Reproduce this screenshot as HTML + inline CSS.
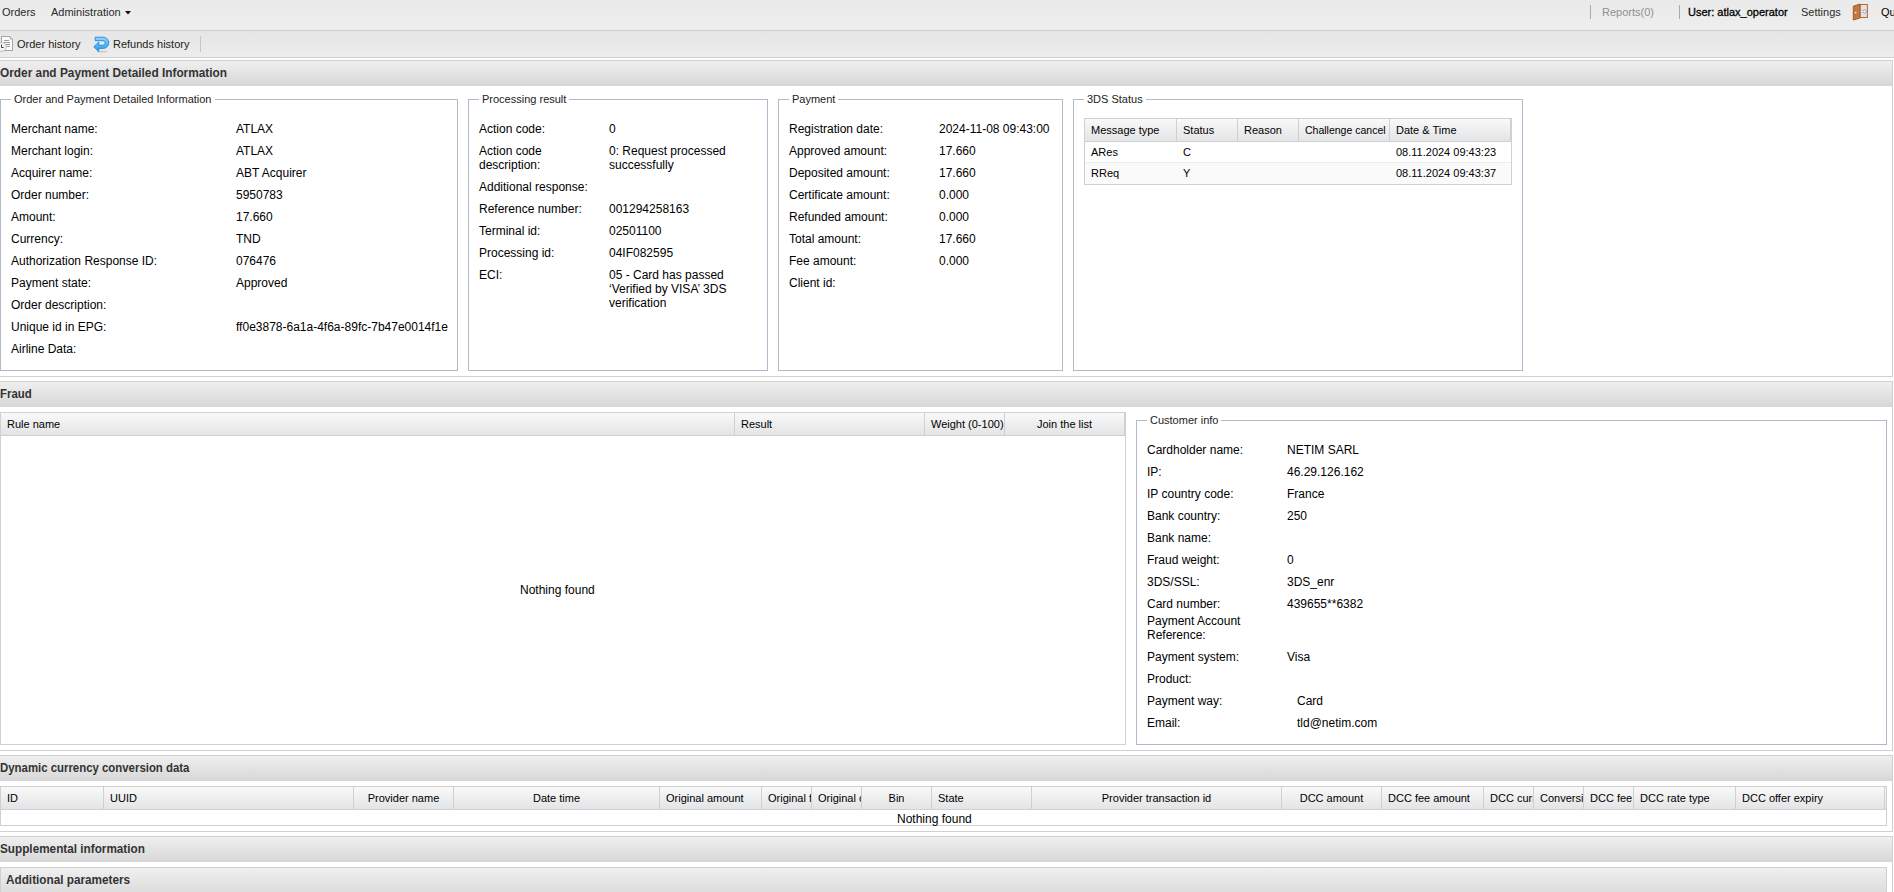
<!DOCTYPE html><html><head><meta charset="utf-8"><style>
html,body{margin:0;padding:0;background:#fff;width:1894px;height:892px;overflow:hidden;position:relative}
.t{position:absolute;white-space:nowrap;font-family:"Liberation Sans",sans-serif;line-height:14px}
.r{position:absolute}
</style></head><body>
<div class="r" style="left:0px;top:0px;width:1894px;height:30px;background:linear-gradient(#eaeaea,#eeeeee)"></div>
<div class="r" style="left:0px;top:30px;width:1894px;height:1px;background:#d0d0d0"></div>
<div class="t" style="left:2px;top:5px;font-size:11px;color:#2a2a2a;">Orders</div>
<div class="t" style="left:51px;top:5px;font-size:11px;color:#2a2a2a;">Administration</div>
<svg class="r" style="left:125px;top:11px" width="6" height="4"><path d="M0 0H6L3 3.5Z" fill="#111"/></svg>
<div class="r" style="left:1590px;top:5px;width:1px;height:14px;background:#b4aa9c"></div>
<div class="t" style="left:1602px;top:5px;font-size:11px;color:#8f8f8f;">Reports(0)</div>
<div class="r" style="left:1679px;top:5px;width:1px;height:14px;background:#b4aa9c"></div>
<div class="t" style="left:1688px;top:5px;font-size:11px;color:#000;-webkit-text-stroke:0.3px #000;">User: atlax_operator</div>
<div class="t" style="left:1801px;top:5px;font-size:11px;color:#2a2a2a;">Settings</div>
<svg class="r" style="left:1852px;top:3px" width="17" height="18" viewBox="0 0 17 18">
<rect x="8.1" y="1.5" width="7.3" height="13" fill="#dfe3e7" stroke="#b8672e" stroke-width="1"/>
<path d="M10 8.5 H13.5 M12 6.8 L14.2 8.5 L12 10.2" fill="none" stroke="#8a8a8a" stroke-width="1.8"/>
<path d="M10 8.5 H13.5 M12 6.8 L14.2 8.5 L12 10.2" fill="none" stroke="#fff" stroke-width="0.9"/>
<path d="M1.3 3.2 L7.9 1.1 V15 L1.3 17 Z" fill="#cd7e44" stroke="#98501f" stroke-width="0.9"/>
<path d="M3.2 3.8 V15.5 M5.5 3 V14.6" stroke="#b7692f" stroke-width="0.7"/>
<circle cx="3.6" cy="9.6" r="0.9" fill="#f2f2f2"/>
</svg>
<div class="t" style="left:1881px;top:5px;font-size:11px;color:#000;">Quit</div>
<div class="r" style="left:0px;top:31px;width:1894px;height:26px;background:linear-gradient(#e6e6e6,#ececec)"></div>
<div class="r" style="left:0px;top:57px;width:1894px;height:1px;background:#d0d0d0"></div>
<svg class="r" style="left:0px;top:35px" width="15" height="17" viewBox="0 0 15 17">
<path d="M1.5 1.5 H10 L12.5 4 V15.5 H1.5 Z" fill="#fbfbfb" stroke="#a4a4a4"/>
<path d="M10 1.5 V4 H12.5" fill="#e8e8e8" stroke="#b0b0b0"/>
<path d="M4 5.5H9 M4 7.5H10 M5.5 9.5H10 M6.5 11.5H10" stroke="#9c9c9c" stroke-width="1"/>
<circle cx="1.7" cy="12" r="4.4" fill="#f4f4f2" stroke="#bdbdbd" stroke-width="1"/>
<path d="M1.5 9.6 V12.5 H3.6" fill="none" stroke="#3a3a3a" stroke-width="1"/>
</svg>
<div class="t" style="left:17px;top:37px;font-size:11px;color:#222;">Order history</div>
<svg class="r" style="left:93px;top:36px" width="17" height="17" viewBox="0 0 17 17">
<defs><linearGradient id="rg" x1="0" y1="0" x2="0" y2="1"><stop offset="0" stop-color="#8fd6ff"/><stop offset="1" stop-color="#1aa0f0"/></linearGradient></defs>
<ellipse cx="9" cy="15.6" rx="5.5" ry="0.9" fill="#c9c9c9"/>
<path d="M2.2 1.2 H10.2 A5.6 5.6 0 0 1 10.2 12.4 H5.8 V15.6 L0.7 10.8 L5.8 6.1 V9.2 H10 A2.2 2.2 0 0 0 10 4.7 H2.2 Z" fill="url(#rg)" stroke="#2a86d6" stroke-width="0.9" stroke-linejoin="round"/>
</svg>
<div class="t" style="left:113px;top:37px;font-size:11px;color:#222;">Refunds history</div>
<div class="r" style="left:200px;top:36px;width:1px;height:16px;background:#c6c6c6"></div>
<div class="r" style="left:0px;top:60px;width:1893px;height:1px;background:#d0d0d0"></div>
<div class="r" style="left:0px;top:61px;width:1893px;height:25px;background:linear-gradient(#efefef,#d7d7d7);"></div>
<div class="r" style="left:1892px;top:60px;width:1px;height:26px;background:#d0d0d0"></div>
<div class="t" style="left:0px;top:66px;font-size:12px;font-weight:bold;color:#333;transform:scaleX(0.987);transform-origin:0 0;">Order and Payment Detailed Information</div>
<div class="r" style="left:1892px;top:86px;width:1px;height:291px;background:#d0d0d0"></div>
<div class="r" style="left:0px;top:376px;width:1893px;height:1px;background:#d0d0d0"></div>
<div class="r" style="left:0px;top:99px;width:458px;height:272px;border:1px solid #b5b8c8;box-sizing:border-box;"></div>
<div class="t" style="left:11px;top:92px;font-size:11px;color:#222;background:#fff;padding:0 3px">Order and Payment Detailed Information</div>
<div class="t" style="left:11px;top:122px;font-size:12px;color:#000;">Merchant name:</div>
<div class="t" style="left:236px;top:122px;font-size:12px;color:#000;">ATLAX</div>
<div class="t" style="left:11px;top:144px;font-size:12px;color:#000;">Merchant login:</div>
<div class="t" style="left:236px;top:144px;font-size:12px;color:#000;">ATLAX</div>
<div class="t" style="left:11px;top:166px;font-size:12px;color:#000;">Acquirer name:</div>
<div class="t" style="left:236px;top:166px;font-size:12px;color:#000;">ABT Acquirer</div>
<div class="t" style="left:11px;top:188px;font-size:12px;color:#000;">Order number:</div>
<div class="t" style="left:236px;top:188px;font-size:12px;color:#000;">5950783</div>
<div class="t" style="left:11px;top:210px;font-size:12px;color:#000;">Amount:</div>
<div class="t" style="left:236px;top:210px;font-size:12px;color:#000;">17.660</div>
<div class="t" style="left:11px;top:232px;font-size:12px;color:#000;">Currency:</div>
<div class="t" style="left:236px;top:232px;font-size:12px;color:#000;">TND</div>
<div class="t" style="left:11px;top:254px;font-size:12px;color:#000;">Authorization Response ID:</div>
<div class="t" style="left:236px;top:254px;font-size:12px;color:#000;">076476</div>
<div class="t" style="left:11px;top:276px;font-size:12px;color:#000;">Payment state:</div>
<div class="t" style="left:236px;top:276px;font-size:12px;color:#000;">Approved</div>
<div class="t" style="left:11px;top:298px;font-size:12px;color:#000;">Order description:</div>
<div class="t" style="left:11px;top:320px;font-size:12px;color:#000;">Unique id in EPG:</div>
<div class="t" style="left:236px;top:320px;font-size:12px;color:#000;">ff0e3878-6a1a-4f6a-89fc-7b47e0014f1e</div>
<div class="t" style="left:11px;top:342px;font-size:12px;color:#000;">Airline Data:</div>
<div class="r" style="left:468px;top:99px;width:300px;height:272px;border:1px solid #b5b8c8;box-sizing:border-box;"></div>
<div class="t" style="left:479px;top:92px;font-size:11px;color:#222;background:#fff;padding:0 3px">Processing result</div>
<div class="t" style="left:479px;top:122px;font-size:12px;color:#000;">Action code:</div>
<div class="t" style="left:609px;top:122px;font-size:12px;color:#000;">0</div>
<div class="t" style="left:479px;top:144px;font-size:12px;color:#000;">Action code</div>
<div class="t" style="left:479px;top:158px;font-size:12px;color:#000;">description:</div>
<div class="t" style="left:609px;top:144px;font-size:12px;color:#000;">0: Request processed</div>
<div class="t" style="left:609px;top:158px;font-size:12px;color:#000;">successfully</div>
<div class="t" style="left:479px;top:180px;font-size:12px;color:#000;">Additional response:</div>
<div class="t" style="left:479px;top:202px;font-size:12px;color:#000;">Reference number:</div>
<div class="t" style="left:609px;top:202px;font-size:12px;color:#000;">001294258163</div>
<div class="t" style="left:479px;top:224px;font-size:12px;color:#000;">Terminal id:</div>
<div class="t" style="left:609px;top:224px;font-size:12px;color:#000;">02501100</div>
<div class="t" style="left:479px;top:246px;font-size:12px;color:#000;">Processing id:</div>
<div class="t" style="left:609px;top:246px;font-size:12px;color:#000;">04IF082595</div>
<div class="t" style="left:479px;top:268px;font-size:12px;color:#000;">ECI:</div>
<div class="t" style="left:609px;top:268px;font-size:12px;color:#000;">05 - Card has passed</div>
<div class="t" style="left:609px;top:282px;font-size:12px;color:#000;">‘Verified by VISA’ 3DS</div>
<div class="t" style="left:609px;top:296px;font-size:12px;color:#000;">verification</div>
<div class="r" style="left:778px;top:99px;width:285px;height:272px;border:1px solid #b5b8c8;box-sizing:border-box;"></div>
<div class="t" style="left:789px;top:92px;font-size:11px;color:#222;background:#fff;padding:0 3px">Payment</div>
<div class="t" style="left:789px;top:122px;font-size:12px;color:#000;">Registration date:</div>
<div class="t" style="left:939px;top:122px;font-size:12px;color:#000;">2024-11-08 09:43:00</div>
<div class="t" style="left:789px;top:144px;font-size:12px;color:#000;">Approved amount:</div>
<div class="t" style="left:939px;top:144px;font-size:12px;color:#000;">17.660</div>
<div class="t" style="left:789px;top:166px;font-size:12px;color:#000;">Deposited amount:</div>
<div class="t" style="left:939px;top:166px;font-size:12px;color:#000;">17.660</div>
<div class="t" style="left:789px;top:188px;font-size:12px;color:#000;">Certificate amount:</div>
<div class="t" style="left:939px;top:188px;font-size:12px;color:#000;">0.000</div>
<div class="t" style="left:789px;top:210px;font-size:12px;color:#000;">Refunded amount:</div>
<div class="t" style="left:939px;top:210px;font-size:12px;color:#000;">0.000</div>
<div class="t" style="left:789px;top:232px;font-size:12px;color:#000;">Total amount:</div>
<div class="t" style="left:939px;top:232px;font-size:12px;color:#000;">17.660</div>
<div class="t" style="left:789px;top:254px;font-size:12px;color:#000;">Fee amount:</div>
<div class="t" style="left:939px;top:254px;font-size:12px;color:#000;">0.000</div>
<div class="t" style="left:789px;top:276px;font-size:12px;color:#000;">Client id:</div>
<div class="r" style="left:1073px;top:99px;width:450px;height:272px;border:1px solid #b5b8c8;box-sizing:border-box;"></div>
<div class="t" style="left:1084px;top:92px;font-size:11px;color:#222;background:#fff;padding:0 3px">3DS Status</div>
<div class="r" style="left:1084px;top:118px;width:428px;height:67px;border:1px solid #d0d0d0;box-sizing:border-box;"></div>
<div class="r" style="left:1085px;top:119px;width:426px;height:22px;background:linear-gradient(#f9f9f9,#e3e4e6);"></div>
<div class="r" style="left:1085px;top:141px;width:426px;height:1px;background:#d0d0d0"></div>
<div class="r" style="left:1176px;top:119px;width:1px;height:22px;background:#d0d0d0"></div>
<div class="r" style="left:1237px;top:119px;width:1px;height:22px;background:#d0d0d0"></div>
<div class="r" style="left:1298px;top:119px;width:1px;height:22px;background:#d0d0d0"></div>
<div class="r" style="left:1389px;top:119px;width:1px;height:22px;background:#d0d0d0"></div>
<div class="r" style="left:1510px;top:119px;width:1px;height:22px;background:#d0d0d0"></div>
<div class="t" style="left:1091px;top:123px;font-size:11px;color:#000;">Message type</div>
<div class="t" style="left:1183px;top:123px;font-size:11px;color:#000;">Status</div>
<div class="t" style="left:1244px;top:123px;font-size:11px;color:#000;">Reason</div>
<div class="t" style="left:1305px;top:123px;font-size:11px;color:#000;transform:scaleX(0.955);transform-origin:0 0;">Challenge cancel</div>
<div class="t" style="left:1396px;top:123px;font-size:11px;color:#000;">Date &amp; Time</div>
<div class="r" style="left:1085px;top:162px;width:426px;height:1px;background:#ededed"></div>
<div class="r" style="left:1085px;top:163px;width:426px;height:21px;background:#fafafa"></div>
<div class="t" style="left:1091px;top:145px;font-size:11px;color:#000;">ARes</div>
<div class="t" style="left:1183px;top:145px;font-size:11px;color:#000;">C</div>
<div class="t" style="left:1396px;top:145px;font-size:11px;color:#000;">08.11.2024 09:43:23</div>
<div class="t" style="left:1091px;top:166px;font-size:11px;color:#000;">RReq</div>
<div class="t" style="left:1183px;top:166px;font-size:11px;color:#000;">Y</div>
<div class="t" style="left:1396px;top:166px;font-size:11px;color:#000;">08.11.2024 09:43:37</div>
<div class="r" style="left:0px;top:381px;width:1893px;height:1px;background:#d0d0d0"></div>
<div class="r" style="left:0px;top:382px;width:1893px;height:25px;background:linear-gradient(#efefef,#d7d7d7);"></div>
<div class="r" style="left:1892px;top:381px;width:1px;height:26px;background:#d0d0d0"></div>
<div class="t" style="left:0px;top:387px;font-size:12px;font-weight:bold;color:#333;transform:scaleX(0.95);transform-origin:0 0;">Fraud</div>
<div class="r" style="left:1892px;top:407px;width:1px;height:344px;background:#d0d0d0"></div>
<div class="r" style="left:0px;top:750px;width:1893px;height:1px;background:#d0d0d0"></div>
<div class="r" style="left:0px;top:412px;width:1126px;height:333px;border:1px solid #d0d0d0;box-sizing:border-box;"></div>
<div class="r" style="left:1px;top:413px;width:1124px;height:22px;background:linear-gradient(#f9f9f9,#e3e4e6);"></div>
<div class="r" style="left:1px;top:435px;width:1124px;height:1px;background:#d0d0d0"></div>
<div class="r" style="left:734px;top:413px;width:1px;height:22px;background:#d0d0d0"></div>
<div class="r" style="left:924px;top:413px;width:1px;height:22px;background:#d0d0d0"></div>
<div class="r" style="left:1004px;top:413px;width:1px;height:22px;background:#d0d0d0"></div>
<div class="r" style="left:1124px;top:413px;width:1px;height:22px;background:#d0d0d0"></div>
<div class="t" style="left:7px;top:417px;font-size:11px;color:#000;">Rule name</div>
<div class="t" style="left:741px;top:417px;font-size:11px;color:#000;">Result</div>
<div class="t" style="left:931px;top:417px;font-size:11px;color:#000;">Weight (0-100)</div>
<div class="t" style="left:1005px;width:119px;text-align:center;top:417px;font-size:11px;color:#000">Join the list</div>
<div class="t" style="left:520px;top:583px;font-size:12px;color:#000;">Nothing found</div>
<div class="r" style="left:1136px;top:420px;width:751px;height:325px;border:1px solid #b5b8c8;box-sizing:border-box;"></div>
<div class="t" style="left:1147px;top:413px;font-size:11px;color:#222;background:#fff;padding:0 3px">Customer info</div>
<div class="t" style="left:1147px;top:443px;font-size:12px;color:#000;">Cardholder name:</div>
<div class="t" style="left:1287px;top:443px;font-size:12px;color:#000;">NETIM SARL</div>
<div class="t" style="left:1147px;top:465px;font-size:12px;color:#000;">IP:</div>
<div class="t" style="left:1287px;top:465px;font-size:12px;color:#000;">46.29.126.162</div>
<div class="t" style="left:1147px;top:487px;font-size:12px;color:#000;">IP country code:</div>
<div class="t" style="left:1287px;top:487px;font-size:12px;color:#000;">France</div>
<div class="t" style="left:1147px;top:509px;font-size:12px;color:#000;">Bank country:</div>
<div class="t" style="left:1287px;top:509px;font-size:12px;color:#000;">250</div>
<div class="t" style="left:1147px;top:531px;font-size:12px;color:#000;">Bank name:</div>
<div class="t" style="left:1147px;top:553px;font-size:12px;color:#000;">Fraud weight:</div>
<div class="t" style="left:1287px;top:553px;font-size:12px;color:#000;">0</div>
<div class="t" style="left:1147px;top:575px;font-size:12px;color:#000;">3DS/SSL:</div>
<div class="t" style="left:1287px;top:575px;font-size:12px;color:#000;">3DS_enr</div>
<div class="t" style="left:1147px;top:597px;font-size:12px;color:#000;">Card number:</div>
<div class="t" style="left:1287px;top:597px;font-size:12px;color:#000;">439655**6382</div>
<div class="t" style="left:1147px;top:614px;font-size:12px;color:#000;">Payment Account</div>
<div class="t" style="left:1147px;top:628px;font-size:12px;color:#000;">Reference:</div>
<div class="t" style="left:1147px;top:650px;font-size:12px;color:#000;">Payment system:</div>
<div class="t" style="left:1287px;top:650px;font-size:12px;color:#000;">Visa</div>
<div class="t" style="left:1147px;top:672px;font-size:12px;color:#000;">Product:</div>
<div class="t" style="left:1147px;top:694px;font-size:12px;color:#000;">Payment way:</div>
<div class="t" style="left:1297px;top:694px;font-size:12px;color:#000;">Card</div>
<div class="t" style="left:1147px;top:716px;font-size:12px;color:#000;">Email:</div>
<div class="t" style="left:1297px;top:716px;font-size:12px;color:#000;">tld@netim.com</div>
<div class="r" style="left:0px;top:755px;width:1893px;height:1px;background:#d0d0d0"></div>
<div class="r" style="left:0px;top:756px;width:1893px;height:25px;background:linear-gradient(#efefef,#d7d7d7);"></div>
<div class="r" style="left:1892px;top:755px;width:1px;height:26px;background:#d0d0d0"></div>
<div class="t" style="left:0px;top:761px;font-size:12px;font-weight:bold;color:#333;transform:scaleX(0.95);transform-origin:0 0;">Dynamic currency conversion data</div>
<div class="r" style="left:1892px;top:781px;width:1px;height:51px;background:#d0d0d0"></div>
<div class="r" style="left:0px;top:831px;width:1893px;height:1px;background:#d0d0d0"></div>
<div class="r" style="left:0px;top:786px;width:1887px;height:40px;border:1px solid #d0d0d0;box-sizing:border-box;"></div>
<div class="r" style="left:1px;top:787px;width:1885px;height:22px;background:linear-gradient(#f9f9f9,#e3e4e6);"></div>
<div class="r" style="left:1px;top:809px;width:1885px;height:1px;background:#d0d0d0"></div>
<div class="r" style="left:103px;top:787px;width:1px;height:22px;background:#d0d0d0"></div>
<div class="r" style="left:353px;top:787px;width:1px;height:22px;background:#d0d0d0"></div>
<div class="r" style="left:453px;top:787px;width:1px;height:22px;background:#d0d0d0"></div>
<div class="r" style="left:659px;top:787px;width:1px;height:22px;background:#d0d0d0"></div>
<div class="r" style="left:761px;top:787px;width:1px;height:22px;background:#d0d0d0"></div>
<div class="r" style="left:811px;top:787px;width:1px;height:22px;background:#d0d0d0"></div>
<div class="r" style="left:861px;top:787px;width:1px;height:22px;background:#d0d0d0"></div>
<div class="r" style="left:931px;top:787px;width:1px;height:22px;background:#d0d0d0"></div>
<div class="r" style="left:1031px;top:787px;width:1px;height:22px;background:#d0d0d0"></div>
<div class="r" style="left:1281px;top:787px;width:1px;height:22px;background:#d0d0d0"></div>
<div class="r" style="left:1381px;top:787px;width:1px;height:22px;background:#d0d0d0"></div>
<div class="r" style="left:1483px;top:787px;width:1px;height:22px;background:#d0d0d0"></div>
<div class="r" style="left:1533px;top:787px;width:1px;height:22px;background:#d0d0d0"></div>
<div class="r" style="left:1583px;top:787px;width:1px;height:22px;background:#d0d0d0"></div>
<div class="r" style="left:1633px;top:787px;width:1px;height:22px;background:#d0d0d0"></div>
<div class="r" style="left:1735px;top:787px;width:1px;height:22px;background:#d0d0d0"></div>
<div class="r" style="left:1884px;top:787px;width:1px;height:22px;background:#d0d0d0"></div>
<div class="t" style="left:7px;top:791px;font-size:11px;color:#000;">ID</div>
<div class="t" style="left:110px;top:791px;font-size:11px;color:#000;">UUID</div>
<div class="t" style="left:354px;width:99px;text-align:center;top:791px;font-size:11px;color:#000">Provider name</div>
<div class="t" style="left:454px;width:205px;text-align:center;top:791px;font-size:11px;color:#000">Date time</div>
<div class="t" style="left:666px;top:791px;font-size:11px;color:#000;">Original amount</div>
<div class="r" style="left:762px;top:787px;width:49px;height:22px;overflow:hidden">
<div class="t" style="left:6px;top:4px;font-size:11px;color:#000;">Original fee</div>
</div>
<div class="r" style="left:812px;top:787px;width:49px;height:22px;overflow:hidden">
<div class="t" style="left:6px;top:4px;font-size:11px;color:#000;">Original currency</div>
</div>
<div class="t" style="left:862px;width:69px;text-align:center;top:791px;font-size:11px;color:#000">Bin</div>
<div class="t" style="left:938px;top:791px;font-size:11px;color:#000;">State</div>
<div class="t" style="left:1032px;width:249px;text-align:center;top:791px;font-size:11px;color:#000">Provider transaction id</div>
<div class="t" style="left:1282px;width:99px;text-align:center;top:791px;font-size:11px;color:#000">DCC amount</div>
<div class="t" style="left:1388px;top:791px;font-size:11px;color:#000;">DCC fee amount</div>
<div class="r" style="left:1484px;top:787px;width:49px;height:22px;overflow:hidden">
<div class="t" style="left:6px;top:4px;font-size:11px;color:#000;">DCC currency</div>
</div>
<div class="r" style="left:1534px;top:787px;width:49px;height:22px;overflow:hidden">
<div class="t" style="left:6px;top:4px;font-size:11px;color:#000;">Conversion rate</div>
</div>
<div class="r" style="left:1584px;top:787px;width:49px;height:22px;overflow:hidden">
<div class="t" style="left:6px;top:4px;font-size:11px;color:#000;">DCC fee</div>
</div>
<div class="t" style="left:1640px;top:791px;font-size:11px;color:#000;">DCC rate type</div>
<div class="t" style="left:1742px;top:791px;font-size:11px;color:#000;">DCC offer expiry</div>
<div class="t" style="left:897px;top:812px;font-size:12px;color:#000;">Nothing found</div>
<div class="r" style="left:0px;top:836px;width:1893px;height:1px;background:#d0d0d0"></div>
<div class="r" style="left:0px;top:837px;width:1893px;height:25px;background:linear-gradient(#efefef,#d7d7d7);"></div>
<div class="r" style="left:1892px;top:836px;width:1px;height:26px;background:#d0d0d0"></div>
<div class="t" style="left:0px;top:842px;font-size:12px;font-weight:bold;color:#333;transform:scaleX(0.979);transform-origin:0 0;">Supplemental information</div>
<div class="r" style="left:1892px;top:862px;width:1px;height:30px;background:#d0d0d0"></div>
<div class="r" style="left:0px;top:867px;width:1887px;height:34px;border:1px solid #d0d0d0;box-sizing:border-box;background:linear-gradient(#efefef,#d7d7d7);"></div>
<div class="t" style="left:5.5px;top:873px;font-size:12px;font-weight:bold;color:#333;transform:scaleX(0.98);transform-origin:0 0;">Additional parameters</div>
</body></html>
